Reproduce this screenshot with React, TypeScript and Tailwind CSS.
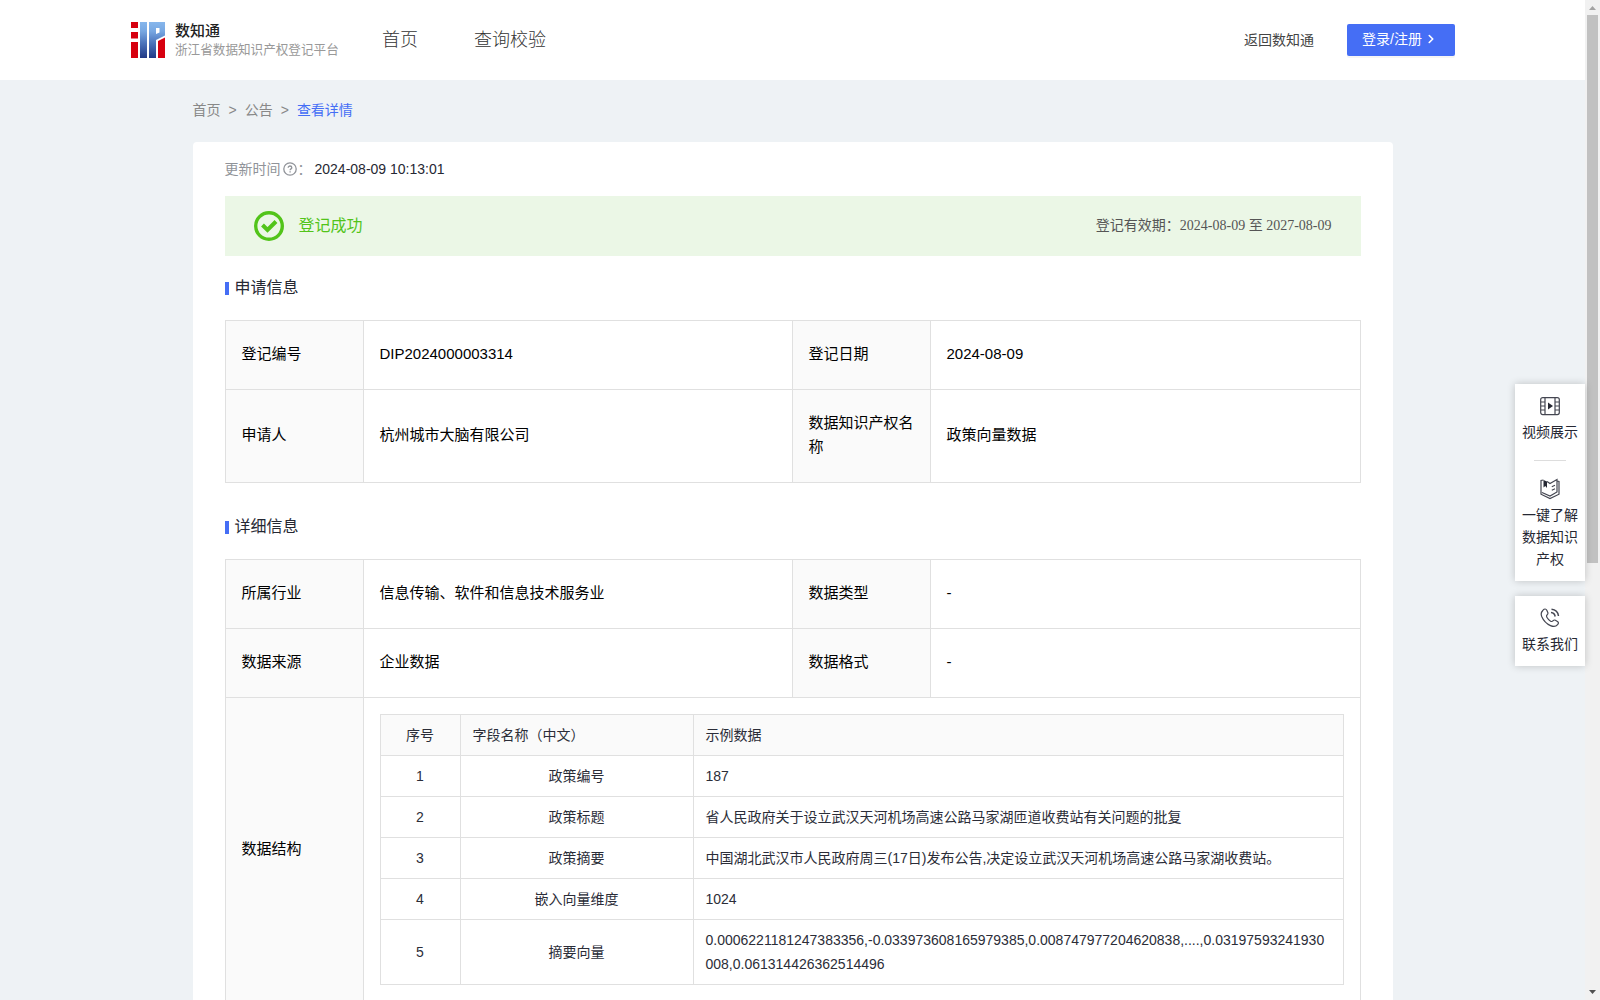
import type { ReactNode } from "react";
import { ChevronRight } from "lucide-react";

const fields = [
    { name: "政策编号", sample: "187" },
    { name: "政策标题", sample: "省人民政府关于设立武汉天河机场高速公路马家湖匝道收费站有关问题的批复" },
    { name: "政策摘要", sample: "中国湖北武汉市人民政府周三(17日)发布公告,决定设立武汉天河机场高速公路马家湖收费站。" },
    { name: "嵌入向量维度", sample: "1024" },
    { name: "摘要向量", sample: "0.0006221181247383356,-0.033973608165979385,0.008747977204620838,....,0.03197593241930008,0.061314426362514496" },
];

function Logo() {
    return (
        <svg width="34" height="36" viewBox="0 0 34 36" className="shrink-0">
            <defs>
                <linearGradient id="logoBlue" x1="0" y1="0" x2="0" y2="1">
                    <stop offset="0" stopColor="#86b6ec" />
                    <stop offset="0.25" stopColor="#78a8e2" />
                    <stop offset="0.6" stopColor="#4a72ba" />
                    <stop offset="1" stopColor="#223a86" />
                </linearGradient>
            </defs>
            <path fill="#d7000f" d="M0 0h7v6H0zM0 10h7v6.500H0zM0 20h7v16H0zM27 19l7-3.500V36h-7z" />
            <path fill="url(#logoBlue)" d="M9 0h7v36H9zM18 0h16v13.500l-9 4.500v18h-7zM25 6v6l3.500-1.500V6z" fillRule="evenodd" />
        </svg>
    );
}

function Header() {
    return (
        <header className="flex h-20 items-center bg-white pl-[131px] pr-[130px]">
            <Logo />
            <div className="ml-[10px] flex w-[207px] flex-col pt-px">
                <span className="text-[15px] leading-[19px] font-medium text-[#222]">数知通</span>
                <span className="text-[12.6px] leading-[20px] text-[#999]">浙江省数据知识产权登记平台</span>
            </div>
            <nav className="flex gap-14 text-lg leading-7 font-light text-[#333]">
                <a>首页</a>
                <a>查询校验</a>
            </nav>
            <a className="ml-auto pb-px text-sm text-[#444]">返回数知通</a>
            <button className="ml-[33px] flex h-8 w-[108px] items-center rounded-[2px] bg-[#456ef5] pb-[2px] pl-[15px] text-sm text-white shadow-[0_2px_0_rgba(0,0,0,0.04)]">
                登录/注册
                <ChevronRight className="ml-[2px] size-[14px]" strokeWidth={2.8} />
            </button>
        </header>
    );
}

function SectionTitle({ children }: { children: ReactNode }) {
    return (
        <h2 className="flex h-6 items-center gap-[6px] text-base text-[#262833]">
            <span className="mt-px h-[13px] w-1 bg-[#456ef5]" />
            {children}
        </h2>
    );
}

function Label({ children }: { children: ReactNode }) {
    return <div className="flex items-center border-r border-b border-[#e0e0e0] bg-[#fafafa] px-4 pb-[2px] text-[15px] leading-6 text-black">{children}</div>;
}

function Value({ children }: { children: ReactNode }) {
    return <div className="flex items-center border-r border-b border-[#e0e0e0] px-4 pb-[2px] text-[15px] leading-6 text-black">{children}</div>;
}

function FieldTable() {
    return (
        <div className="grid grid-cols-[80px_233px_650px] border-t border-l border-[#e0e0e0] text-sm leading-6 text-[#2b2d38] *:border-r *:border-b *:border-[#e0e0e0] *:px-3 *:py-2">
            <div className="bg-[#fafafa] text-center">序号</div>
            <div className="bg-[#fafafa]">字段名称（中文）</div>
            <div className="bg-[#fafafa]">示例数据</div>
            {fields.map((field, i) => [
                <div key={`${i}-no`} className="flex items-center justify-center">{i + 1}</div>,
                <div key={`${i}-name`} className="flex items-center justify-center">{field.name}</div>,
                <div key={`${i}-sample`} className="break-all">{field.sample}</div>,
            ])}
        </div>
    );
}

function SideBar() {
    return (
        <aside className="absolute top-[384px] right-[15px] flex w-[70px] flex-col gap-[15px] text-center text-sm leading-[22px] text-[#262833]">
            <div className="flex h-[197px] flex-col items-center bg-white pt-3 shadow-[0_0_8px_rgba(0,0,0,0.2)]">
                <svg width="20" height="20" viewBox="0 0 20 20" fill="none" stroke="#444651" strokeWidth="1.2">
                    <rect x="0.700" y="1.600" width="18.600" height="17" rx="2" />
                    <path d="M5 1.600v17M15 1.600v17M1 6h4M1 10h4M1 14h4M15 6h4M15 10h4M15 14h4" />
                    <path d="M8 6.500v7l5-3.500z" fill="#262833" stroke="none" />
                </svg>
                <span className="mt-[5px]">视频展示</span>
                <span className="mt-[17px] h-px w-8 bg-[#ddd]" />
                <svg className="mt-[17px]" width="20" height="22" viewBox="0 0 20 22" fill="none" stroke="#444651" strokeWidth="1.2">
                    <path d="M3.500 2L1 2.500v13.700l9 4.300 9-4.300V3.500l-2-.5M7 3.500l3 2 7-4v12.500L10 18l-8-3.500" />
                    <path d="M3.500 2v7.500l1.800-1.500 1.700 2V3.500z" fill="#262833" stroke="none" />
                    <path d="M11.800 8.800l3.200-1.500M11.800 12.300l3.200-1.500" />
                </svg>
                <span className="mt-[4px] w-14">一键了解数据知识产权</span>
            </div>
            <div className="flex h-[70px] flex-col items-center bg-white pt-3 shadow-[0_0_8px_rgba(0,0,0,0.2)]">
                <svg width="20" height="20" viewBox="0 0 20 20" fill="none" stroke="#444651" strokeWidth="1.2">
                    <path d="M3 2.200C4.500.500 6 .700 6.800 2.200l1 2.300c.5 1.200 0 1.800-.8 2.500-.8.800-.6 1.500 0 2.500 1 1.700 2.200 2.900 3.600 3.700 1 .5 1.600.5 2.300-.3.800-.9 1.500-1.200 2.500-.7l2 1.200c1.300.8 1.300 2 .2 3.200-1.700 2.100-4.200 2.300-7.100 1C6.700 15.900 3.500 12.700 1.700 8.500.700 6 1.200 3.900 3 2.200z" />
                    <path d="M11 4.500c2.300.2 3.800 1.700 4.200 4M11.500 1.200c3.800.3 6.500 2.800 7 6.800" strokeWidth="1.500" />
                </svg>
                <span className="mt-[5px]">联系我们</span>
            </div>
        </aside>
    );
}

function ScrollBar() {
    return (
        <div className="flex h-full w-[15px] flex-col items-center justify-between bg-[#f1f1f1]">
            <div className="flex flex-col items-center">
                <svg width="15" height="15" viewBox="0 0 15 15"><path d="M4 10l3.500-4 3.500 4z" fill="#a3a3a3" /></svg>
                <div className="h-[548px] w-[11px] bg-[#c1c1c1]" />
            </div>
            <svg width="15" height="15" viewBox="0 0 15 15"><path d="M4 5l3.500 4L11 5z" fill="#505050" /></svg>
        </div>
    );
}

export default function App() {
    return (
        <div className="relative flex h-[1000px] w-[1600px] overflow-hidden bg-[#eef2f5] font-['Liberation_Sans','Noto_Sans_CJK_SC',sans-serif]">
            <div className="h-full min-w-0 flex-1 overflow-hidden">
                <Header />
                <main className="mx-auto w-[1200px]">
                    <div className="flex h-[62px] items-center gap-2 pb-[2px] text-sm text-[#888]">
                        <span>首页</span>
                        <span>&gt;</span>
                        <span>公告</span>
                        <span>&gt;</span>
                        <span className="text-[#456ef5]">查看详情</span>
                    </div>
                    <div className="rounded bg-white px-8 pb-8">
                        <div className="flex h-[54px] items-center text-sm text-[#262833]">
                            <span className="text-[#909399]">更新时间</span>
                            <svg className="ml-[2px]" width="14" height="14" viewBox="0 0 14 14" fill="none" stroke="#909399" strokeWidth="1.300">
                                <circle cx="7" cy="7" r="6.200" />
                                <path d="M5.200 5.700c0-2.300 3.600-2.200 3.600 0 0 1.200-1.700 1.200-1.700 2.500M7.100 9.300v1.200" />
                            </svg>
                            <span className="w-[17px] pl-px text-[#909399]">：</span>
                            <span className="pl-px">2024-08-09 10:13:01</span>
                        </div>
                        <div className="flex h-[60px] items-center bg-[#ebf7e6] px-[29px]">
                            <svg width="30" height="30" viewBox="0 0 30 30" fill="none" stroke="#52c41a">
                                <circle cx="15" cy="15" r="13.300" strokeWidth="3.400" />
                                <path d="M8.500 14l5 5 8.500-8.500" strokeWidth="4" />
                            </svg>
                            <span className="ml-[15px] text-base text-[#52c41a]">登记成功</span>
                            <span className="ml-auto font-['Liberation_Serif','Noto_Sans_CJK_SC',serif] text-sm text-[#555]">登记有效期：2024-08-09 至 2027-08-09</span>
                        </div>
                        <div className="pt-5">
                            <SectionTitle>申请信息</SectionTitle>
                        </div>
                        <div className="mt-5 grid grid-cols-[138px_429px_138px_430px] grid-rows-[69px_93px] border-t border-l border-[#e0e0e0]">
                            <Label>登记编号</Label>
                            <Value>DIP2024000003314</Value>
                            <Label>登记日期</Label>
                            <Value>2024-08-09</Value>
                            <Label>申请人</Label>
                            <Value>杭州城市大脑有限公司</Value>
                            <Label>数据知识产权名称</Label>
                            <Value>政策向量数据</Value>
                        </div>
                        <div className="pt-8">
                            <SectionTitle>详细信息</SectionTitle>
                        </div>
                        <div className="mt-5 grid grid-cols-[138px_429px_138px_430px] grid-rows-[69px_69px] border-t border-l border-[#e0e0e0]">
                            <Label>所属行业</Label>
                            <Value>信息传输、软件和信息技术服务业</Value>
                            <Label>数据类型</Label>
                            <Value>-</Value>
                            <Label>数据来源</Label>
                            <Value>企业数据</Value>
                            <Label>数据格式</Label>
                            <Value>-</Value>
                            <Label>数据结构</Label>
                            <div className="col-span-3 border-r border-b border-[#e0e0e0] p-4">
                                <FieldTable />
                            </div>
                        </div>
                    </div>
                </main>
            </div>
            <ScrollBar />
            <SideBar />
        </div>
    );
}
